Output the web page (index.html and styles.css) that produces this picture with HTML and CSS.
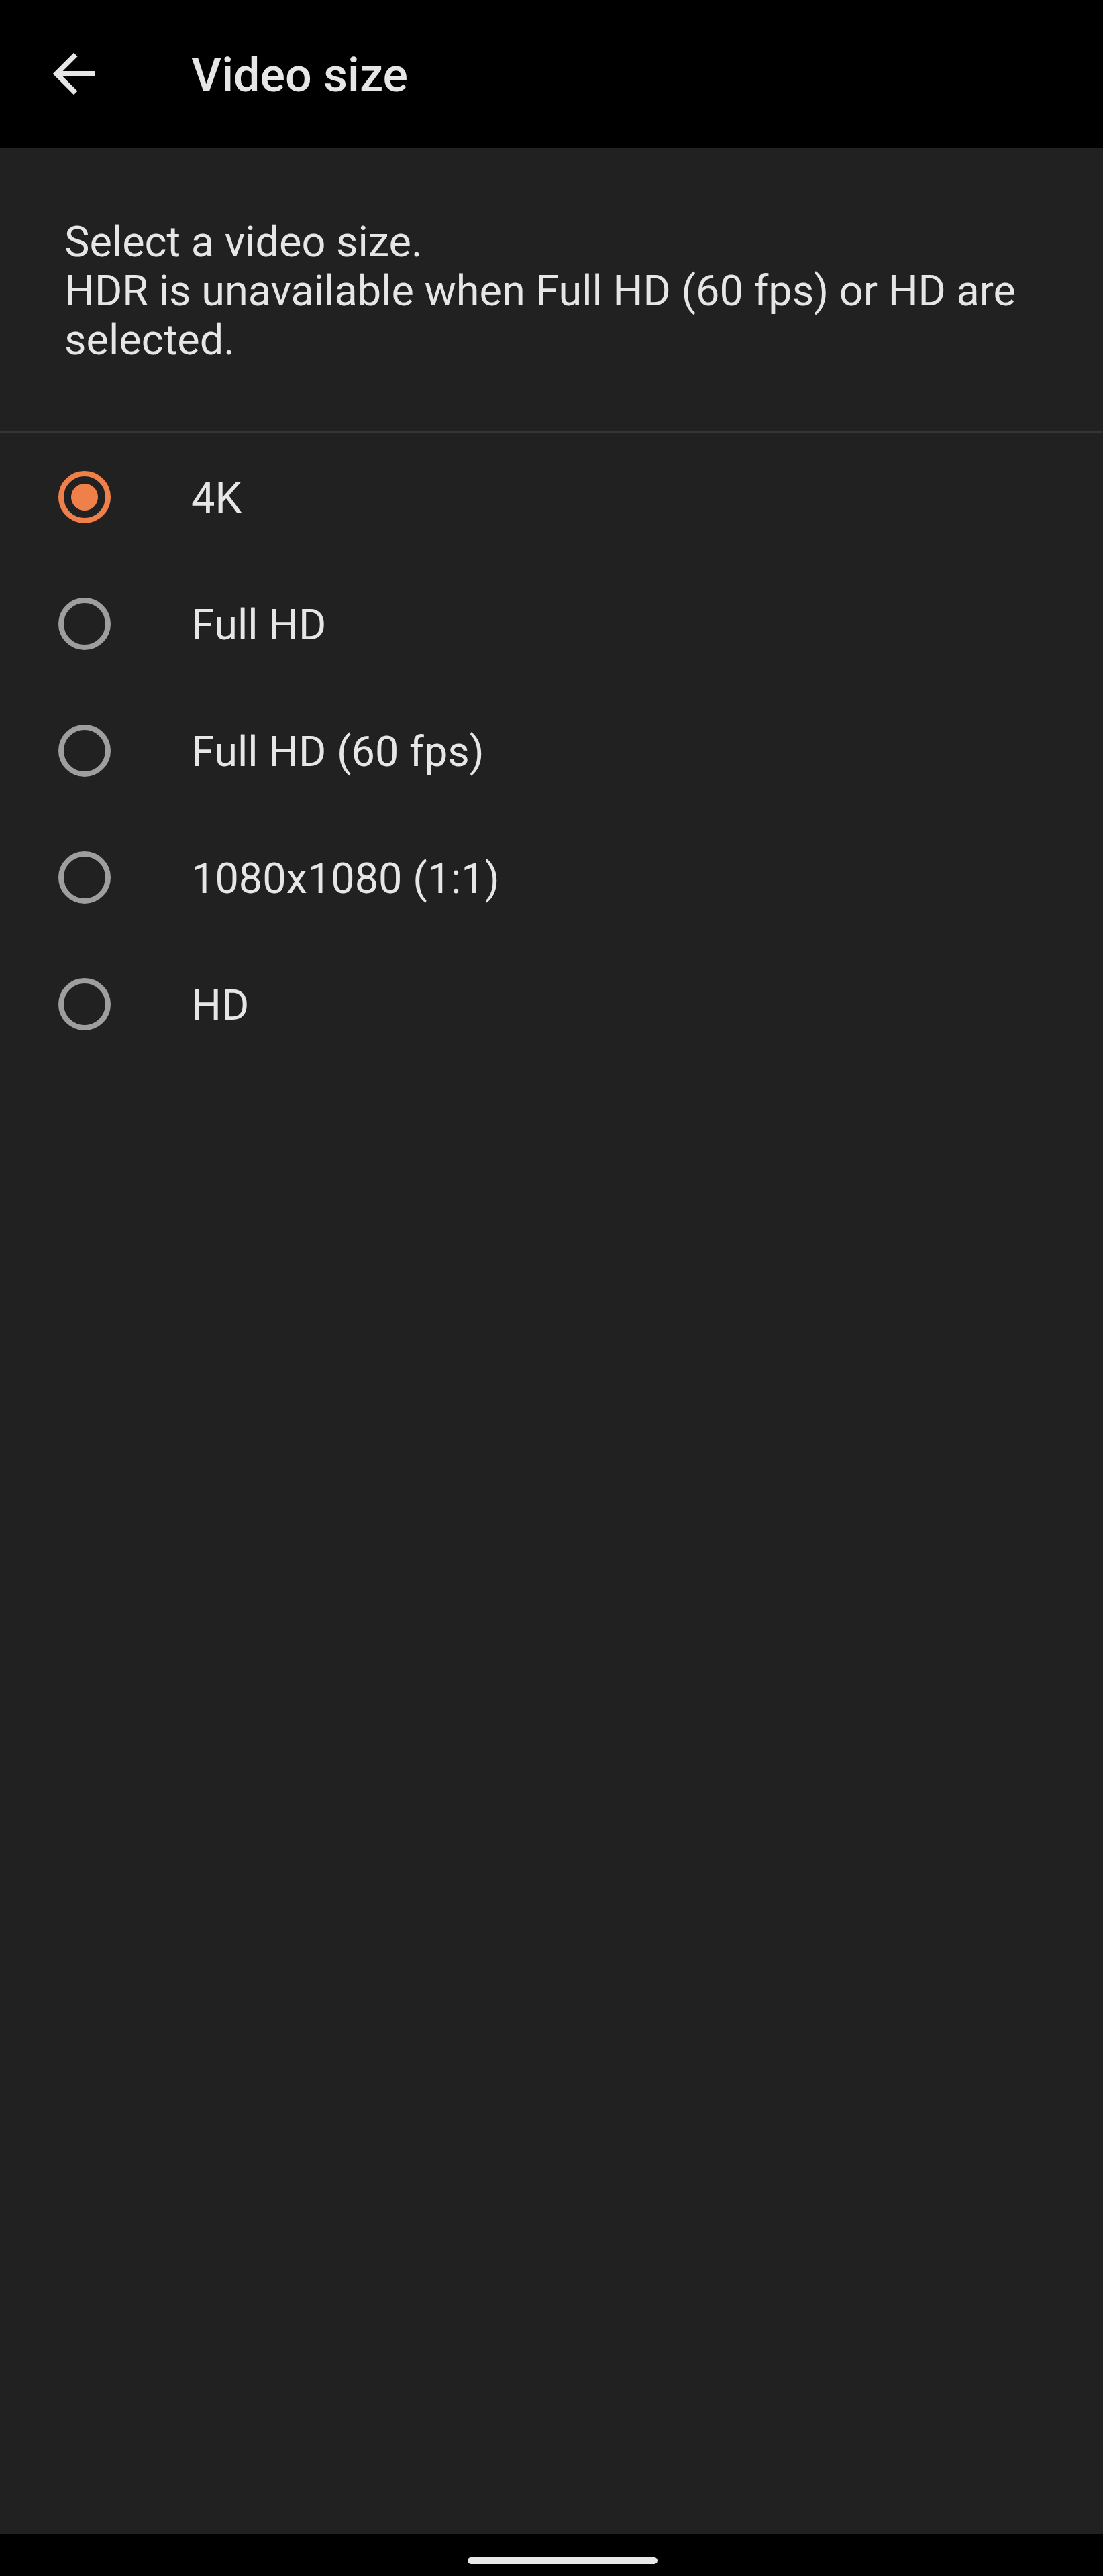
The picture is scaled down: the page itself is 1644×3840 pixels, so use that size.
FILE: index.html
```html
<!DOCTYPE html>
<html lang="en">
<head>
<meta charset="utf-8">
<title>Video size</title>
<link rel="stylesheet" href="styles.css">
</head>
<body>
<div class="screen">
  <header class="appbar">
    <button class="back" aria-label="Back">
      <svg viewBox="0 0 24 24" width="94" height="94"><path fill="#e6e6e6" d="M20 11H7.83l5.59-5.59L12 4l-8 8 8 8 1.41-1.41L7.83 13H20v-2z"/></svg>
    </button>
    <h1 class="title">Video size</h1>
  </header>
  <main class="content">
    <p class="desc">Select a video size.<br>HDR is unavailable when Full HD (60 fps) or HD are selected.</p>
    <ul class="options">
      <li class="option selected"><span class="radio"></span><span class="label">4K</span></li>
      <li class="option"><span class="radio"></span><span class="label">Full HD</span></li>
      <li class="option"><span class="radio"></span><span class="label">Full HD (60 fps)</span></li>
      <li class="option"><span class="radio"></span><span class="label">1080x1080 (1:1)</span></li>
      <li class="option"><span class="radio"></span><span class="label">HD</span></li>
    </ul>
  </main>
  <footer class="navbar"><span class="pill"></span></footer>
</div>
</body>
</html>
```
FILE: styles.css
```css
html, body {
  margin: 0;
  padding: 0;
  background: #212121;
}
body {
  font-family: Roboto, "Noto Sans", sans-serif;
  color: #e6e6e6;
}
.screen {
  width: 1644px;
  height: 3840px;
  display: flex;
  flex-direction: column;
}
.appbar {
  height: 220px;
  flex: none;
  background: #000;
  display: flex;
  align-items: center;
}
.back {
  background: none;
  border: 0;
  padding: 0;
  margin: 0 0 0 63px;
  width: 94px;
  height: 94px;
  display: flex;
}
.title {
  margin: 4px 0 0 128px;
  font-size: 70px;
  font-weight: 500;
  line-height: 80px;
  color: #e6e6e6;
  letter-spacing: 0;
}
.content {
  flex: 1;
  background: #212121;
}
.desc {
  margin: 0;
  padding: 104px 90px 99px 96px;
  font-size: 63px;
  line-height: 73px;
  color: #e6e6e6;
  border-bottom: 4px solid #353535;
}
.options {
  list-style: none;
  margin: 0;
  padding: 0;
}
.option {
  height: 189px;
  display: flex;
  align-items: center;
}
.radio {
  box-sizing: border-box;
  width: 78px;
  height: 78px;
  margin-left: 87px;
  border: 8px solid #9e9e9e;
  border-radius: 50%;
  display: flex;
  align-items: center;
  justify-content: center;
  flex: none;
}
.selected .radio {
  border-color: #f0804a;
}
.selected .radio::after {
  content: "";
  width: 40px;
  height: 40px;
  border-radius: 50%;
  background: #f0804a;
}
.label {
  margin-left: 120px;
  font-size: 63px;
  line-height: 73px;
  padding-top: 4px;
  color: #e6e6e6;
}
.navbar {
  height: 63px;
  flex: none;
  background: #000;
  display: flex;
  justify-content: center;
  align-items: flex-start;
}
.pill {
  margin-top: 35px;
  margin-left: 32px;
  width: 283px;
  height: 10px;
  border-radius: 5px;
  background: #e8e8e8;
}
```
